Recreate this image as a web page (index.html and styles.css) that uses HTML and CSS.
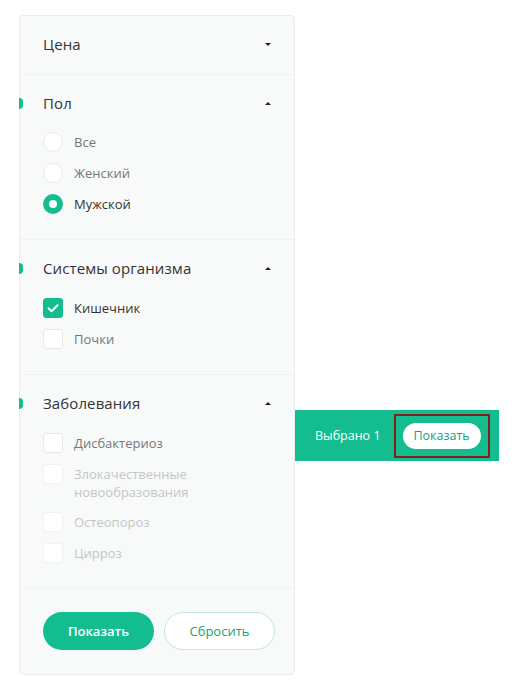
FILE: index.html
```html
<!DOCTYPE html>
<html lang="ru">
<head>
<meta charset="utf-8">
<title>Фильтр</title>
<link rel="stylesheet" href="styles.css">
</head>
<body>
<div class="stage">
  <aside class="filter">
    <section class="group">
      <header class="group-head">
        <span class="group-title">Цена</span>
        <span class="caret caret-down"></span>
      </header>
    </section>

    <section class="group open">
      <header class="group-head">
        <span class="marker"></span>
        <span class="group-title">Пол</span>
        <span class="caret caret-up"></span>
      </header>
      <ul class="options radios">
        <li class="option"><span class="radio"></span><span class="label muted">Все</span></li>
        <li class="option"><span class="radio"></span><span class="label muted">Женский</span></li>
        <li class="option"><span class="radio checked"></span><span class="label">Мужской</span></li>
      </ul>
    </section>

    <section class="group open">
      <header class="group-head">
        <span class="marker"></span>
        <span class="group-title">Системы организма</span>
        <span class="caret caret-up"></span>
      </header>
      <ul class="options">
        <li class="option">
          <span class="check checked">
            <svg viewBox="0 0 20 20" width="20" height="20"><path d="M5.5 10.2 8.6 13.2 14.5 7.2" fill="none" stroke="#fff" stroke-width="2" stroke-linecap="round" stroke-linejoin="round"/></svg>
          </span>
          <span class="label">Кишечник</span>
        </li>
        <li class="option"><span class="check"></span><span class="label muted">Почки</span></li>
      </ul>
    </section>

    <section class="group open">
      <header class="group-head">
        <span class="marker"></span>
        <span class="group-title">Заболевания</span>
        <span class="caret caret-up"></span>
      </header>
      <ul class="options">
        <li class="option"><span class="check"></span><span class="label muted">Дисбактериоз</span></li>
        <li class="option disabled"><span class="check"></span><span class="label">Злокачественные<br>новообразования</span></li>
        <li class="option disabled"><span class="check"></span><span class="label">Остеопороз</span></li>
        <li class="option disabled"><span class="check"></span><span class="label">Цирроз</span></li>
      </ul>
    </section>

    <footer class="actions">
      <button class="btn btn-primary" type="button">Показать</button>
      <button class="btn btn-outline" type="button">Сбросить</button>
    </footer>
  </aside>

  <div class="picked">
    <span class="picked-count">Выбрано 1</span>
    <span class="picked-focus"><button class="pill" type="button">Показать</button></span>
  </div>
</div>
</body>
</html>
```

FILE: styles.css
```css
* { box-sizing: border-box; }

html, body {
  margin: 0;
  padding: 0;
  background: #ffffff;
  font-family: "Open Sans", "Noto Sans", sans-serif;
  color: #333;
}

.stage {
  position: relative;
  width: 520px;
  height: 690px;
  padding: 15px 0 0 19px;
}

/* filter panel */
.filter {
  width: 276px;
  background: #f8fafa;
  border: 1px solid #e8eded;
  border-radius: 4px;
}

.group {
  border-bottom: 1px solid #eef2f2;
}

.group.open {
  padding-bottom: 25px;
}

.group-head {
  position: relative;
  display: flex;
  align-items: center;
  justify-content: space-between;
  height: 58px;
  padding: 0 23px;
}

.group-title {
  font-size: 15px;
  line-height: 20px;
  margin-top: -2px;
  color: #333;
  letter-spacing: 0.1px;
}

.marker {
  position: absolute;
  left: -1px;
  top: 23px;
  width: 4px;
  height: 11px;
  background: #13bd8f;
  border-radius: 0 6px 6px 0 / 0 5.5px 5.5px 0;
}

.caret {
  width: 0;
  height: 0;
  margin-top: -1px;
  border-left: 3px solid transparent;
  border-right: 3px solid transparent;
}
.caret-down { border-top: 3px solid #222; }
.caret-up { border-bottom: 3px solid #222; }

/* option lists */
.options {
  list-style: none;
  margin: 0;
  padding: 0 23px;
  display: flex;
  flex-direction: column;
  gap: 11px;
}

.radios {
  margin-top: -1px;
}

.option {
  display: flex;
  align-items: flex-start;
  gap: 11px;
}

.label {
  font-size: 13px;
  line-height: 18px;
  padding-top: 1px;
  color: #333;
}

.label.muted { color: #777; }

.radio,
.check {
  flex: none;
  width: 20px;
  height: 20px;
  background: #fff;
  border: 1px solid #e6eaea;
}

.radio { border-radius: 50%; }

.radio.checked {
  background: #fff;
  border: 6px solid #13bd8f;
}

.check { border-radius: 3px; }

.check.checked {
  background: #13bd8f;
  border-color: #13bd8f;
  display: flex;
  align-items: center;
  justify-content: center;
}

.check.checked svg {
  flex: none;
  margin: -1px;
}

.option.disabled .check { border-color: #eff2f2; }
.option.disabled .label { color: #c4c6c6; }

/* footer buttons */
.actions {
  display: flex;
  gap: 10px;
  padding: 23px 19px 24px 23px;
}

.btn {
  flex: none;
  width: 111px;
  height: 38px;
  border-radius: 19px;
  font-family: inherit;
  font-size: 13px;
  cursor: pointer;
}

.btn-primary {
  background: #13bd8f;
  border: 0;
  color: #fff;
  font-weight: 600;
}

.btn-outline {
  background: #fff;
  border: 1px solid #bfe9dc;
  color: #1a9f7a;
}

/* selection popup */
.picked {
  position: absolute;
  left: 295px;
  top: 410px;
  width: 204px;
  height: 51px;
  background: #13bd8f;
  display: flex;
  align-items: center;
  padding-left: 20px;
  gap: 13px;
}

.picked-count {
  font-size: 12.5px;
  color: #fff;
}

.picked-focus {
  display: flex;
  padding: 7px;
  border: 2px solid #8a1b1b;
}

.pill {
  width: 78px;
  height: 26px;
  border: 0;
  border-radius: 13px;
  background: #fff;
  color: #1a9f7a;
  font-family: inherit;
  font-size: 12.5px;
  padding: 0;
}
```
